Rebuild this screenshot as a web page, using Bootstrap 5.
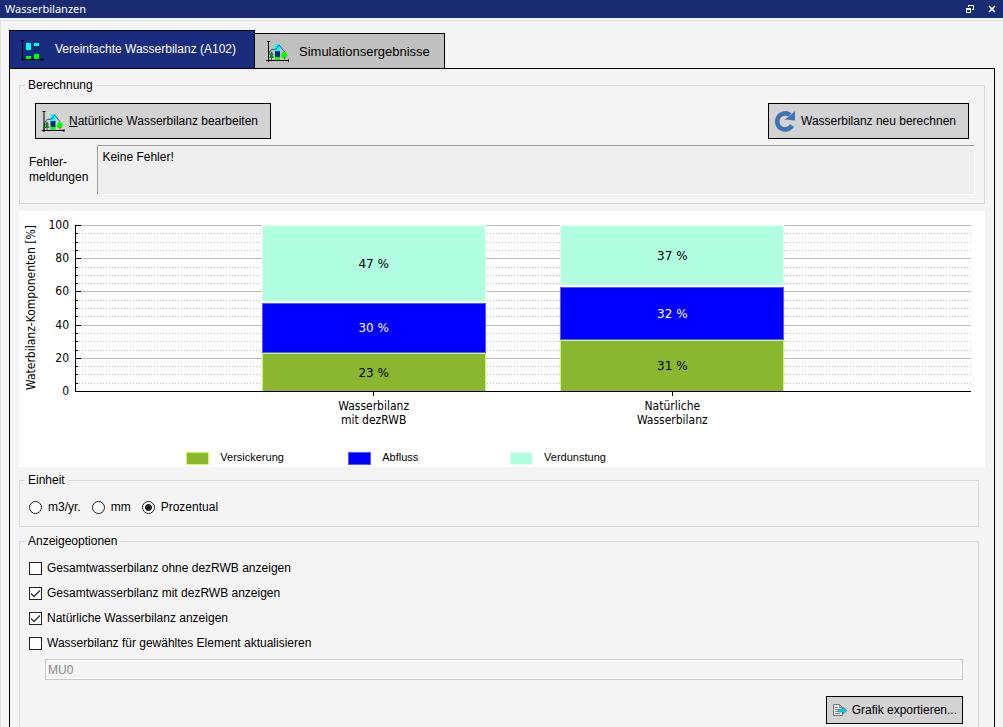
<!DOCTYPE html>
<html lang="de">
<head>
<meta charset="utf-8">
<meta name="viewport" content="width=device-width, initial-scale=1">
<title>Wasserbilanzen</title>
<link href="https://cdn.jsdelivr.net/npm/bootstrap@5.3.0/dist/css/bootstrap.min.css" rel="stylesheet">
<style>
  body { font: 12px/15px "Liberation Sans", Arial, sans-serif; color: #000; background: #f4f4f4; }
  .titlebar { height: 18px; background: #192c72; color: #fff; font: 11px/18px "Noto Sans", sans-serif; padding: 0 4px 0 5px; }
  .titlebar button { background: none; border: 0; padding: 0; width: 14px; height: 14px; display: flex; }
  .dock { border-top: 1px solid #e2e2e2; border-left: 1px solid #e2e2e2; margin-top: 2px; padding: 9px 8px 0 8px; }
  .tabs { margin-bottom: -1px; }
  .tab-btn { border: 1px solid #000; background: #c0c0c0; color: #000; font-size: 13px; height: 36px; width: 191px; padding: 0 0 0 11px; gap: 10px; margin-left: -1px; }
  .tab-btn.active { background: #192c7d; color: #fff; font-size: 12px; height: 39px; width: 246px; border-bottom-color: #fff; margin: 0; }
  .pane { border: 1px solid #000; border-bottom: 0; padding: 9px 9px 0; }
  .group { border: 1px solid #dadada; padding: 0 9px; }
  .group legend { float: none; width: auto; font-size: 12px; line-height: 15px; margin: 0 0 0 -4px; padding: 0 3px; }
  .push { border: 1px solid #000; background: #d3d3d3; color: #000; height: 36px; padding: 0 5px; }
  .push:hover { background: #c8c8c8; }
  .push.edit { min-width: 236px; }
  .push.renew { min-width: 201px; }
  .push.export { height: 28px; min-width: 137px; }
  .actions { padding: 10px 6px 6px; }
  .report { padding-bottom: 8px; }
  .report label { margin-right: 9px; }
  .messages { height: 50px; background: #efefef; border: 1px solid #fff; border-top-color: #a0a0a0; border-left-color: #a0a0a0; padding: 4px; resize: none; color: #000; }
  .chart { background: #fff; font: 12px/14px "DejaVu Sans Condensed", "DejaVu Sans", sans-serif; padding: 7px 14px 2px 5px; margin-top: 7px; }
  .chart-row { height: 180px; }
  .y-title { width: 16px; writing-mode: vertical-rl; transform: rotate(180deg); text-align: center; white-space: nowrap; }
  .y-values { width: 29px; text-align: right; }
  .plot { display: grid; margin: 7px 0 6px 6px; }
  .plot > * { grid-area: 1 / 1; min-width: 0; }
  .bars { display: grid; grid-template-columns: 5fr 6fr 2fr 6fr 5fr; }
  .bars .first { grid-column: 2; }
  .bars .second { grid-column: 4; }
  .stack { height: 166px; }
  .part { flex-basis: 0; min-height: 0; font-family: "DejaVu Sans", sans-serif; }
  .evap { background: #b0ffe1; border: 1px solid #e4fff6; border-bottom: 2px solid #fff; }
  .runoff { background: #00f; color: #fff; border: 1px solid #5a5af8; }
  .seep { background: #8ab72f; border: 1px solid #c4ff62; border-bottom: 0; }
  .x-values { margin-left: 51px; padding-top: 1px; }
  .legend-row { display: grid; grid-template-columns: 31fr 30fr 30fr 88fr; margin: 22px -14px 0 -5px; font: 11px/16px "Liberation Sans", Arial, sans-serif; }
  .legend-row div:first-child { grid-column: 2; }
  .swatch { width: 23px; height: 13px; margin: 3px 11px 0 0; }
  .swatch.seep { border-bottom: 1px solid #c4ff62; }
  .swatch.evap { border-bottom: 1px solid #e4fff6; }
  .narrow { margin-right: 6px; }
  .unit { margin-top: 6px; }
  .units { padding: 10px 0 9px; height: 38px; }
  .units label { margin: 0 11px 0 6px; }
  .display { margin-top: 7px; }
  .tick { appearance: none; width: 13px; height: 13px; margin: 0; border: 1px solid #222; background: #fff center / 11px 11px no-repeat; flex: none; }
  .tick[type=radio] { border-radius: 50%; }
  .tick[type=radio]:checked { background-image: radial-gradient(circle, #222 3px, transparent 4px); }
  .tick[type=checkbox]:checked { background-image: url("data:image/svg+xml,%3Csvg xmlns='http://www.w3.org/2000/svg' viewBox='0 0 11 11'%3E%3Cpath d='M1 5.5 4 8.5 10 2.5' fill='none' stroke='%23333' stroke-width='1.3'/%3E%3C/svg%3E"); }
  .options { padding-top: 7px; }
  .option { height: 25px; gap: 5px; }
  .element-row { padding: 3px 6px 16px 16px; }
  .element { display: block; width: 100%; height: 21px; border: 1px solid #c8c8c8; background: #f4f4f4; color: #8a8a8a; padding: 0 2px; box-shadow: inset 0 0 0 1px #fff; }
</style>
</head>
<body class="vh-100 overflow-hidden d-flex flex-column">
<svg width="0" height="0" class="position-absolute" aria-hidden="true">
  <symbol id="landscape" viewBox="0 0 23 22">
    <path d="M9 4h5v7H9z" fill="#0ff"/><path d="M9 11h5v6H9z" fill="#003080"/><path d="M9 17h5v3H9z" fill="#0f0"/>
    <path d="M2.500 20C2.500 13 4 10 6 9.500 8 9 10 10 11 8l2-3c2 1 3 5 6 7" fill="none" stroke="#205090" stroke-width="1"/>
    <path d="M5.500 11 3.500 15h1L3 18h5l-1.500-3h1z" fill="#148424"/><path d="M5 18h1v2H5z" fill="#844"/>
    <path d="M18 11.500 20.500 13l1 2.500L20 18h-3.500l-1.500-2 1-3z" fill="#0f0"/><path d="M18 17h1v3h-1z" fill="#a52"/>
    <path d="M1 1h3v1H3v18h19v-1h1v3h-1v-1H3v1H2v-1H0v-1h2V2H1z" fill="#000"/>
  </symbol>
</svg>

<header class="titlebar d-flex align-items-center flex-shrink-0">
  <span class="me-auto">Wasserbilanzen</span>
  <button type="button" aria-label="Fenster lösen" class="me-2"><svg width="14" height="14" viewBox="0 0 14 14" fill="none" stroke="#fff" shape-rendering="crispEdges"><path d="M5.500 5V3.500h5v4H9M5 3.500h6M3.500 6.500h4v4h-4zM3 7.500h5"/></svg></button>
  <button type="button" aria-label="Schließen"><svg width="14" height="14" viewBox="0 0 14 14" stroke="#fff" stroke-width="1.600"><path d="m4 4 6 6m0-6-6 6"/></svg></button>
</header>

<main class="dock flex-grow-1 d-flex flex-column">
  <div class="tabs d-flex align-items-end" role="tablist">
    <button type="button" role="tab" aria-selected="true" class="tab-btn active d-flex align-items-center">
      <svg width="24" height="22" viewBox="0 0 24 22" shape-rendering="crispEdges"><path d="M5 4h5v7H5zM13 4h5v3h-5z" fill="#0ff"/><path d="M5 11h5v6H5zM13 7h5v8h-5z" fill="#003080"/><path d="M5 17h5v3H5zM13 15h5v5h-5z" fill="#0f0"/><path d="M0 1h3v1H2v18h19v-1h1v1h1v1h-1v1h-1v-1H2v1H1v-1H0v-1h1V2H0z" fill="#000"/></svg>
      Vereinfachte Wasserbilanz (A102)
    </button>
    <button type="button" role="tab" aria-selected="false" class="tab-btn d-flex align-items-center">
      <svg width="23" height="22"><use href="#landscape"/></svg>
      Simulationsergebnisse
    </button>
  </div>

  <div class="pane flex-grow-1 d-flex flex-column" role="tabpanel">
    <fieldset class="group">
      <legend>Berechnung</legend>
      <div class="actions d-flex justify-content-between">
        <button type="button" class="push edit d-flex align-items-center gap-1"><svg width="24" height="22"><use href="#landscape"/></svg><span><u>N</u>atürliche Wasserbilanz bearbeiten</span></button>
        <button type="button" class="push renew d-flex align-items-center gap-1"><svg width="23" height="24" viewBox="0 0 23 24"><path d="M18 16.500a8 8 0 1 1-2-10.500" fill="none" stroke="#3f73b3" stroke-width="4.600"/><path d="M21 2v9.500L10.500 10.500 15 7.500z" fill="#3f73b3"/></svg>Wasserbilanz neu berechnen</button>
      </div>
      <div class="report d-flex align-items-center">
        <label for="messages" class="flex-shrink-0">Fehler-<br>meldungen</label>
        <textarea id="messages" class="messages flex-grow-1" readonly>Keine Fehler!</textarea>
      </div>
    </fieldset>

    <section class="chart" aria-label="Wasserbilanz-Diagramm">
      <div class="chart-row d-flex">
        <div class="y-title">Waterbilanz-Komponenten [%]</div>
        <div class="y-values d-flex flex-column justify-content-between"><span>100</span><span>80</span><span>60</span><span>40</span><span>20</span><span>0</span></div>
        <div class="plot flex-grow-1">
          <svg width="100%" height="167" id="grid" class="d-block overflow-visible" shape-rendering="crispEdges"></svg>
          <div class="bars">
            <div class="stack first d-flex flex-column text-center">
              <div class="part evap d-flex align-items-center justify-content-center" style="flex-grow:47">47 %</div>
              <div class="part runoff d-flex align-items-center justify-content-center" style="flex-grow:30">30 %</div>
              <div class="part seep d-flex align-items-center justify-content-center" style="flex-grow:23">23 %</div>
            </div>
            <div class="stack second d-flex flex-column text-center">
              <div class="part evap d-flex align-items-center justify-content-center" style="flex-grow:37">37 %</div>
              <div class="part runoff d-flex align-items-center justify-content-center" style="flex-grow:32">32 %</div>
              <div class="part seep d-flex align-items-center justify-content-center" style="flex-grow:31">31 %</div>
            </div>
          </div>
        </div>
      </div>
      <div class="x-values bars text-center">
        <div class="first">Wasserbilanz<br>mit dezRWB</div>
        <div class="second">Natürliche<br>Wasserbilanz</div>
      </div>
      <div class="legend-row">
        <div class="d-flex"><span class="swatch seep"></span>Versickerung</div>
        <div class="d-flex"><span class="swatch runoff"></span>Abfluss</div>
        <div class="d-flex"><span class="swatch evap"></span>Verdunstung</div>
      </div>
    </section>

    <fieldset class="group narrow unit">
      <legend>Einheit</legend>
      <div class="units d-flex align-items-center">
        <input class="tick" type="radio" name="unit" id="u1"><label for="u1">m3/yr.</label>
        <input class="tick" type="radio" name="unit" id="u2"><label for="u2">mm</label>
        <input class="tick" type="radio" name="unit" id="u3" checked><label for="u3">Prozentual</label>
      </div>
    </fieldset>

    <fieldset class="group narrow display flex-grow-1">
      <legend>Anzeigeoptionen</legend>
      <div class="options">
        <div class="option d-flex align-items-center"><input class="tick" type="checkbox" id="c1"><label for="c1">Gesamtwasserbilanz ohne dezRWB anzeigen</label></div>
        <div class="option d-flex align-items-center"><input class="tick" type="checkbox" id="c2" checked><label for="c2">Gesamtwasserbilanz mit dezRWB anzeigen</label></div>
        <div class="option d-flex align-items-center"><input class="tick" type="checkbox" id="c3" checked><label for="c3">Natürliche Wasserbilanz anzeigen</label></div>
        <div class="option d-flex align-items-center"><input class="tick" type="checkbox" id="c4"><label for="c4">Wasserbilanz für gewähltes Element aktualisieren</label></div>
        <div class="element-row">
          <input class="element" type="text" value="MU0" disabled aria-label="Element">
          <div class="d-flex justify-content-end pt-3">
            <button type="button" class="push export d-flex align-items-center gap-1"><svg width="16" height="14" viewBox="0 0 16 14"><path d="M1.500 1.500h6l3 3v8h-9z" fill="#eee" stroke="#777"/><path d="M7.500 1.500v3h3M3 4.500h3M3 6.500h3M3 8.500h3M3 10.500h5" fill="none" stroke="#888"/><path d="M6 6h5V4l4 3.500-4 3.500V9H6z" fill="#10c8e8" stroke="#2a7a96" stroke-width=".5"/></svg>Grafik exportieren...</button>
          </div>
        </div>
      </div>
    </fieldset>
  </div>
</main>
<script>
  // Major line every 20 %, dotted minor line every 5 %
  const height = 166;
  let lines = '';
  for (let v = 0; v <= 100; v += 5) {
    const y = Math.round(height * (100 - v) / 100) + 0.5;
    const major = v % 20 === 0;
    if (v) lines += `<line x1="1" x2="100%" y1="${y}" y2="${y}" stroke="#bcbcbc" ${major ? '' : 'stroke-dasharray="1 2"'}/>`;
    lines += `<line x1="0" x2="${major ? 6 : 3}" y1="${y}" y2="${y}" stroke="#000"/>`;
  }
  lines += '<path d="M.5 0v167" stroke="#000"/><line x1="0" x2="100%" y1="166.5" y2="166.5" stroke="#000"/>';
  for (const x of ['33.33%', '66.66%']) lines += `<line x1="${x}" x2="${x}" y1="166" y2="171" stroke="#000"/>`;
  document.getElementById('grid').innerHTML = lines;
</script>
<script src="https://cdn.jsdelivr.net/npm/bootstrap@5.3.0/dist/js/bootstrap.bundle.min.js"></script>
</body>
</html>
